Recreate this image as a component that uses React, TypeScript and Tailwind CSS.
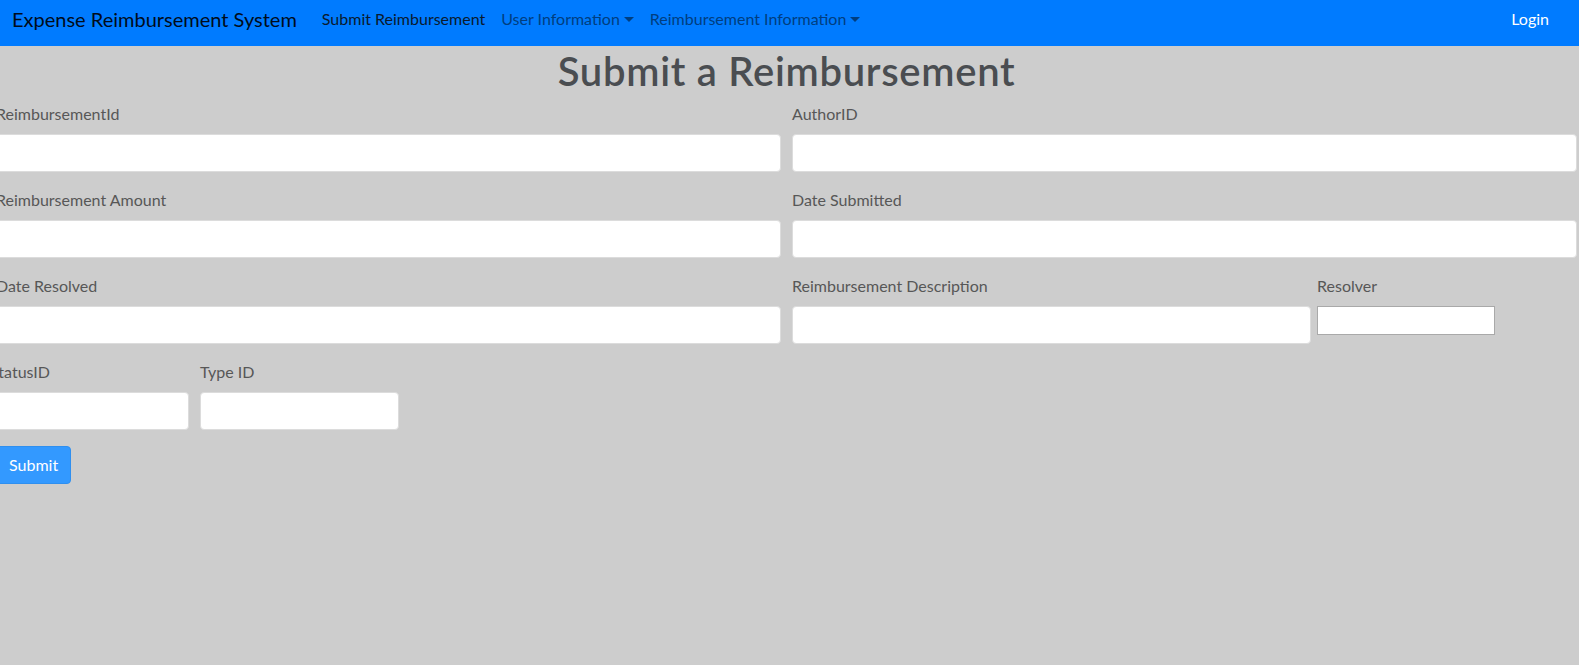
import React from "react";

const font = "font-['Segoe_UI','Lato','Open_Sans',sans-serif]";

function Caret() {
  return (
    <span className="ml-[4px] inline-block h-0 w-0 border-x-[5px] border-t-[5px] border-x-transparent border-t-current align-[3px]" />
  );
}

function Field({
  label,
  width,
  plain = false,
}: {
  label: string;
  width: string;
  plain?: boolean;
}) {
  return (
    <div className={`flex flex-col ${width}`}>
      <label className="mb-2 whitespace-nowrap text-[16px] leading-6 text-[#575757]">
        {label}
      </label>
      {plain ? (
        <input
          type="text"
          className="h-[29px] w-[178px] border border-[#a9a9a9] bg-white outline-none"
        />
      ) : (
        <input
          type="text"
          className="h-[38px] w-full rounded-[4px] border border-[#dcdcdc] bg-white outline-none"
        />
      )}
    </div>
  );
}

export default function App() {
  return (
    <div className={`min-h-[665px] overflow-hidden bg-[#cdcdcd] ${font}`}>
      <nav className="flex h-[46px] items-center bg-[#007bff] pb-[8px] pl-[12px] pr-[30px]">
        <a className="mr-[17px] whitespace-nowrap text-[20px] leading-[30px] text-[#000c1a]">
          Expense Reimbursement System
        </a>
        <ul className="flex items-center text-[16px] leading-6">
          <li className="whitespace-nowrap px-2 text-[#0a1a2e]">Submit Reimbursement</li>
          <li className="whitespace-nowrap px-2 text-[#003e80]">
            User Information
            <Caret />
          </li>
          <li className="whitespace-nowrap px-2 text-[#003e80]">
            Reimbursement Information
            <Caret />
          </li>
        </ul>
        <span className="ml-auto text-[16px] leading-6 text-white">Login</span>
      </nav>

      <div className="-ml-[4px] w-[1581px]">
        <h1 className="mb-2 pt-[2px] text-center text-[40px] font-semibold leading-[46px] tracking-[0.7px] text-[#4a4d51]">
          Submit a Reimbursement
        </h1>

        <form className="flex flex-col">
          <div className="mb-4 flex gap-[11px]">
            <Field label="ReimbursementId" width="w-[785px]" />
            <Field label="AuthorID" width="w-[785px]" />
          </div>
          <div className="mb-4 flex gap-[11px]">
            <Field label="Reimbursement Amount" width="w-[785px]" />
            <Field label="Date Submitted" width="w-[785px]" />
          </div>
          <div className="mb-4 flex items-start gap-[11px]">
            <Field label="Date Resolved" width="w-[785px]" />
            <Field label="Reimbursement Description" width="w-[519px]" />
            <div className="-ml-[5px]">
              <Field label="Resolver" width="w-[178px]" plain />
            </div>
          </div>
          <div className="mb-4 -ml-[6px] flex gap-[11px]">
            <Field label="StatusID" width="w-[199px]" />
            <Field label="Type ID" width="w-[199px]" />
          </div>
          <div>
            <button
              type="button"
              className="h-[38px] rounded-[4px] border border-[#2f8fef] bg-[#3399ff] px-3 text-[16px] leading-6 text-white"
            >
              Submit
            </button>
          </div>
        </form>
      </div>
    </div>
  );
}
